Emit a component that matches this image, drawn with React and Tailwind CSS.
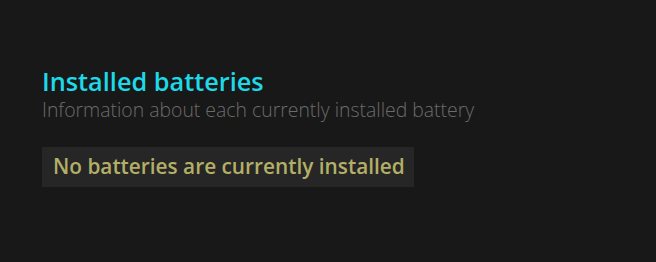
export default function App() {
  return (
    <div className="w-[656px] h-[262px] bg-[#181818] pt-[64px] pl-[42px]" style={{ fontFamily: '"Open Sans", "Noto Sans", sans-serif' }}>
      <h1 className="text-[25.3px] leading-[34px] font-semibold text-[#1fd8e8]">Installed batteries</h1>
      <p className="text-[19.4px] leading-[24px] font-light text-[#6b6b6b]">Information about each currently installed battery</p>
      <div className="mt-[25px] inline-flex items-center h-[40px] pl-[11px] pr-[9px] bg-[#262626]">
        <span className="text-[20.8px] font-semibold text-[#b3af66]">No batteries are currently installed</span>
      </div>
    </div>
  );
}
